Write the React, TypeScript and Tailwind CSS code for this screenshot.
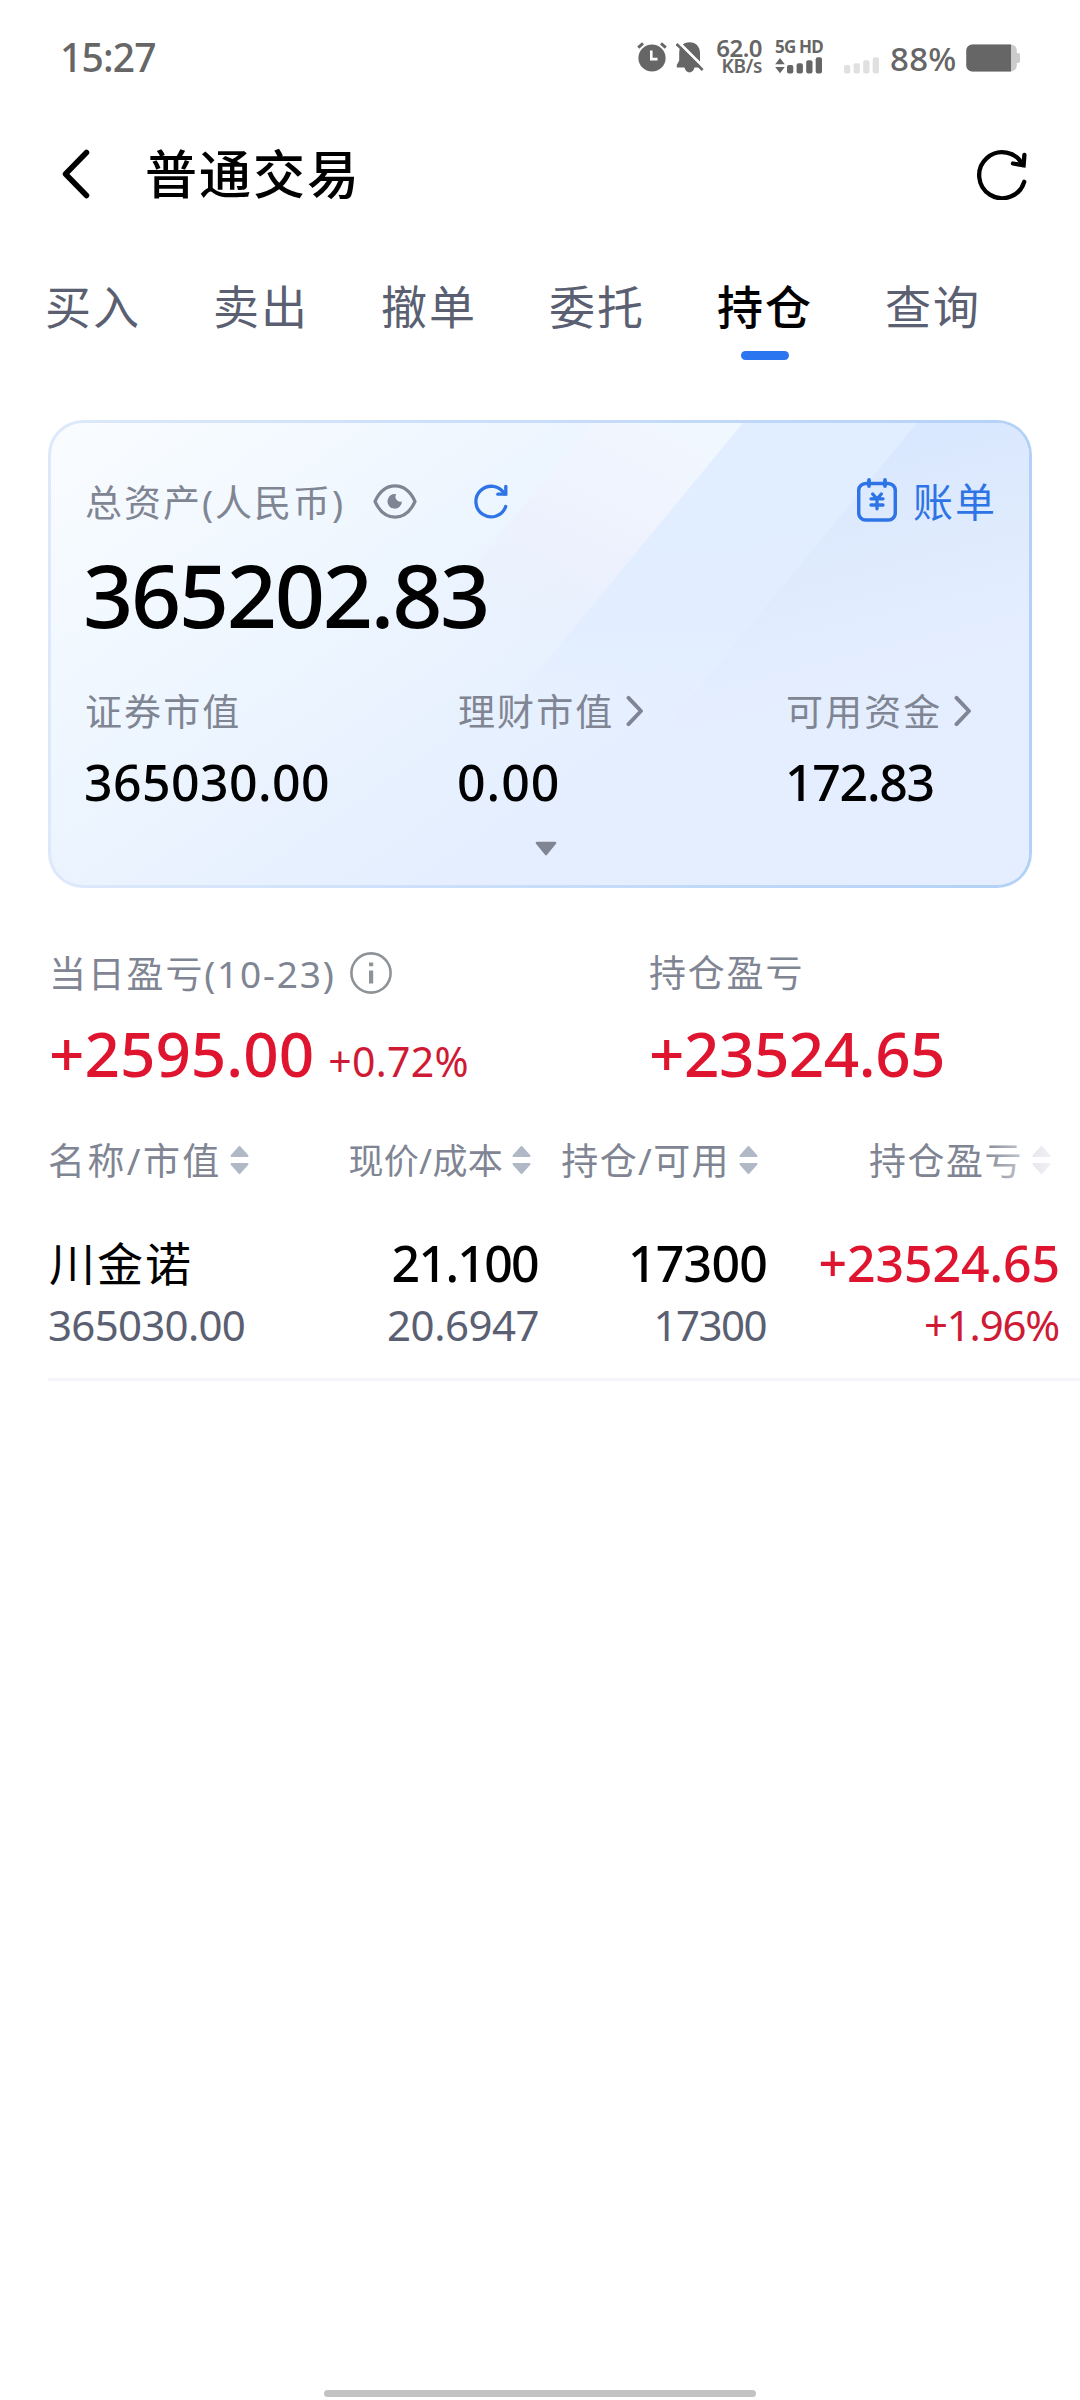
import clsx from 'clsx';

const tabs = ['买入', '卖出', '撤单', '委托', '持仓', '查询'];
const activeTab = '持仓';

function AlarmIcon() {
  return (
    <svg width="30" height="30" viewBox="0 0 30 30" fill="none">
      <circle cx="15" cy="16" r="13.6" fill="#666" />
      <path d="M1.2 5.6 6 1.4M28.8 5.6 24 1.4" stroke="#666" strokeWidth="3" />
      <path d="M14.3 8.5v8.6h6.2" stroke="#fff" strokeWidth="2.6" />
    </svg>
  );
}

function MutedBellIcon() {
  return (
    <svg width="28" height="31" viewBox="0 0 28 31" fill="none">
      <path
        d="M13.5.3C7 .3 3.2 5 3.2 11v7.5L.8 23v2.6h7.7c.6 3 2.6 4.9 5 4.9s4.4-1.9 5-4.9H24V11C24 5 20 .3 13.5.3Z"
        fill="#666"
      />
      <path d="M2.5.2 29 26.5" stroke="#fff" strokeWidth="3" />
      <path d="M.6 2 26.6 28" stroke="#666" strokeWidth="2.6" />
    </svg>
  );
}

function SignalBars({ color }: { color: string }) {
  return (
    <svg width="35" height="17" viewBox="0 0 35 17" fill={color}>
      <rect x="0" y="8" width="6.3" height="8.5" rx="2" />
      <rect x="9.6" y="6.3" width="6.3" height="10.2" rx="2" />
      <rect x="19.2" y="3.2" width="6.3" height="13.3" rx="2" />
      <rect x="28.7" y="0.2" width="6.3" height="16.3" rx="2" />
    </svg>
  );
}

function DataArrows() {
  return (
    <svg width="10" height="17" viewBox="0 0 10 17" fill="#666">
      <path d="M5 1 9.8 7.3H.2ZM5 16.2 9.8 9.9H.2Z" />
    </svg>
  );
}

function BatteryIcon() {
  return (
    <svg width="54" height="28" viewBox="0 0 54 28">
      <rect x="0.3" y="0.5" width="50.5" height="27" rx="6" fill="#cbcbcb" />
      <rect x="49" y="9" width="5" height="10" rx="2" fill="#cbcbcb" />
      <path d="M6.3.5H45v27H6.3a6 6 0 0 1-6-6v-15a6 6 0 0 1 6-6Z" fill="#666" />
    </svg>
  );
}

function BackIcon() {
  return (
    <svg width="28" height="50" viewBox="0 0 28 50" fill="none">
      <path d="M24.5 3.5 3.5 25l21 21.5" stroke="#000" strokeWidth="5.5" strokeLinecap="round" strokeLinejoin="round" />
    </svg>
  );
}

function RefreshIcon() {
  return (
    <svg width="50" height="52" viewBox="0 0 50 52" fill="none" stroke="#000" strokeWidth="4.3" strokeLinecap="round">
      <path d="M47.2 33.8A23 23 0 1 1 45.8 17" />
      <path d="M47.4 7 46.6 17.3 36 15.5" strokeLinejoin="miter" />
    </svg>
  );
}

function SmallRefreshIcon() {
  return (
    <svg width="34" height="35" viewBox="0 0 34 35" fill="none" stroke="#2e74e6" strokeWidth="3.3" strokeLinecap="round">
      <path d="M31.7 22.5A15.3 15.3 0 1 1 30.5 10" />
      <path d="M31.8 2.3v7.9h-8" />
    </svg>
  );
}

function EyeIcon() {
  return (
    <svg width="44" height="35" viewBox="0 0 44 35" fill="none">
      <path
        d="M2 17.5C6.5 7.5 13.5 1.9 22 1.9s15.5 5.6 20 15.6c-4.5 10-11.5 15.6-20 15.6S6.5 27.5 2 17.5Z"
        stroke="#808593"
        strokeWidth="3.2"
        strokeLinejoin="round"
      />
      <path d="M23.2 10.2a5 5 0 0 0 5.8 7.3 7.3 7.3 0 1 1-5.8-7.3Z" fill="#808593" />
    </svg>
  );
}

function BillIcon() {
  return (
    <svg width="40" height="44" viewBox="0 0 40 44" fill="none" stroke="#2e74e6" strokeLinecap="round">
      <rect x="1.7" y="5.5" width="36.6" height="36.6" rx="7" strokeWidth="3.5" />
      <path d="M12 2v6M28 2v6" strokeWidth="3.8" />
      <path d="M15.7 16 20 21l4.3-5M14 20.8h12M14 27h12M20 21v9.800" strokeWidth="3.3" />
    </svg>
  );
}

function InfoIcon() {
  return (
    <svg width="42" height="42" viewBox="0 0 42 42" fill="none">
      <circle cx="21" cy="21" r="19.6" stroke="#8e9397" strokeWidth="2.6" />
      <path d="M19 10.5h4.2v3.8H19ZM19 18.5h4.2v13H19Z" fill="#8e9397" />
    </svg>
  );
}

function ChevronIcon() {
  return (
    <svg width="18" height="32" viewBox="0 0 18 32" fill="none">
      <path d="M2.5 2.8 15 16 2.5 29.2" stroke="#808593" strokeWidth="3.9" strokeLinecap="round" strokeLinejoin="round" />
    </svg>
  );
}

function SortIcon() {
  return (
    <svg width="19" height="30" viewBox="0 0 19 30" fill="#b1b8c6" stroke="#b1b8c6" strokeWidth="2" strokeLinejoin="round">
      <path d="M9.5 2 17.5 11h-16ZM9.5 28 17.5 19h-16Z" />
    </svg>
  );
}

// Diagonal light bands behind the asset card content
function CardBackdrop() {
  return (
    <svg className="absolute inset-0" width="978" height="462" viewBox="0 0 978 462">
      <defs>
        <linearGradient id="sheen" x1="600" y1="0" x2="480" y2="250" gradientUnits="userSpaceOnUse">
          <stop offset="0" stopColor="#f1f7ff" />
          <stop offset="0.5" stopColor="#edf1fd" />
          <stop offset="1" stopColor="#e6f0fd" stopOpacity="0" />
        </linearGradient>
        <linearGradient id="middle" x1="0" y1="0" x2="0" y2="300" gradientUnits="userSpaceOnUse">
          <stop offset="0" stopColor="#e1eeff" />
          <stop offset="0.7" stopColor="#e2eeff" />
          <stop offset="1" stopColor="#e4eeff" stopOpacity="0" />
        </linearGradient>
        <linearGradient id="corner" x1="860" y1="0" x2="920" y2="240" gradientUnits="userSpaceOnUse">
          <stop offset="0" stopColor="#d9e7ff" />
          <stop offset="0.5" stopColor="#dfebfd" />
          <stop offset="1" stopColor="#e4eeff" />
        </linearGradient>
      </defs>
      <path d="M541 0H692L311 462H160Z" fill="url(#sheen)" />
      <path d="M692 0H978V462H311Z" fill="url(#middle)" />
      <path d="M866 0H978V462H485Z" fill="url(#corner)" />
    </svg>
  );
}

function StatusBar() {
  return (
    <div className="flex h-[114px] items-center pl-[60px] text-[#666]">
      <span className="-mt-[2px] text-[39px] leading-none font-[550] tracking-[-0.8px]">15:27</span>
      <div className="ml-auto flex items-center pr-[60px]">
        <AlarmIcon />
        <span className="ml-[9px]">
          <MutedBellIcon />
        </span>
        <div className="ml-[10px] flex w-[48px] flex-col items-end font-semibold">
          <span className="text-[24px] leading-[19px] tracking-[-0.5px]">62.0</span>
          <span className="text-[19px] leading-[19px] tracking-[-0.3px]">KB/s</span>
        </div>
        <div className="ml-[13px] w-[47px]">
          <p className="text-[17px] leading-[14px] font-bold tracking-[-0.8px] whitespace-nowrap">5G HD</p>
          <div className="mt-[3px] flex justify-between">
            <DataArrows />
            <SignalBars color="#666" />
          </div>
        </div>
        <div className="mt-[17px] ml-[22px]">
          <SignalBars color="#e0e0e0" />
        </div>
        <span className="mt-[2px] ml-[11px] w-[68px] text-[33px] leading-none font-[550] tracking-[0.3px]">88%</span>
        <span className="mt-[2px] ml-[8px]">
          <BatteryIcon />
        </span>
      </div>
    </div>
  );
}

function AssetCard() {
  const items = [
    { label: '证券市值', value: '365030.00', link: false, tracking: 'tracking-[0.4px]' },
    { label: '理财市值', value: '0.00', link: true, tracking: 'tracking-[1px]' },
    { label: '可用资金', value: '172.83', link: true, tracking: 'tracking-[-1.3px]' },
  ];

  return (
    <div className="mx-12 h-[468px] rounded-[35px] bg-linear-to-r from-[#dde9fb] to-[#b3d1f7] p-[3px]">
      <div className="relative h-full overflow-hidden rounded-[32px] bg-[linear-gradient(145deg,#fafcff_0%,#f1f8ff_22%,#e9f2fe_46%,#e4eeff_66%)]">
        <CardBackdrop />
        <div className="relative flex h-full flex-col pt-[49px] pr-[32px] pl-[34px]">
          <div className="flex h-[60px] items-center">
            <span className="text-[37px] leading-none tracking-[2px] text-[#808593]">总资产(人民币)</span>
            <span className="-mt-[2px] ml-[28px]">
              <EyeIcon />
            </span>
            <span className="-mt-[2px] ml-[57px]">
              <SmallRefreshIcon />
            </span>
            <div className="ml-auto flex items-center gap-[16px] text-[#2e74e6]">
              <span className="-mt-[5px]">
                <BillIcon />
              </span>
              <span className="text-[40px] leading-none tracking-[2px]">账单</span>
            </div>
          </div>
          <p className="mt-[22px] -ml-[2px] text-[88px] leading-[80px] font-[470] tracking-[-2.4px]">365202.83</p>
          <div className="mt-[57px] grid grid-cols-[373px_328px_auto]">
            {items.map(({ label, value, link, tracking }) => (
              <div key={label}>
                <div className="flex h-10 items-center gap-[12px] text-[#808593]">
                  <span className="text-[37px] leading-none tracking-[2.1px]">{label}</span>
                  {link && <ChevronIcon />}
                </div>
                <p className={clsx('mt-[26px] -ml-px text-[50px] leading-[50px] font-[480]', tracking)}>{value}</p>
              </div>
            ))}
          </div>
          <svg className="mt-[34px] ml-[450px]" width="22" height="15" viewBox="0 0 22 15">
            <path d="M2 2h18l-9 11Z" fill="#808593" stroke="#808593" strokeWidth="2.6" strokeLinejoin="round" />
          </svg>
        </div>
      </div>
    </div>
  );
}

function ProfitSummary() {
  return (
    <div className="mt-[65px] flex pl-[49px]">
      <div className="w-[600px]">
        <div className="flex h-10 items-center gap-[14px] text-[37px] leading-none tracking-[1.8px] text-[#7f8593]">
          当日盈亏(10-23)
          <InfoIcon />
        </div>
        <p className="mt-[30px] flex items-baseline gap-[14px] text-[62px] leading-[60px] font-[480] text-[#df142f]">
          +2595.00
          <span className="text-[41px] leading-none font-normal tracking-[0.3px] text-[#cf1a36]">+0.72%</span>
        </p>
      </div>
      <div>
        <p className="text-[37px] leading-10 tracking-[1.8px] text-[#7f8593]">持仓盈亏</p>
        <p className="mt-[30px] text-[62px] leading-[60px] font-[480] tracking-[-0.5px] text-[#df142f]">+23524.65</p>
      </div>
    </div>
  );
}

function Holdings() {
  return (
    <div className="mt-[57px] pl-12">
      <div className="relative grid h-10 grid-cols-[240px_252px_227px_293px] items-center text-[37px] leading-none whitespace-nowrap text-[#7f8593]">
        <span className="flex items-center gap-[8px] tracking-[2.4px]">
          名称/市值
          <SortIcon />
        </span>
        <span className="flex items-center justify-end gap-[9px] pr-[9px] text-[35px] tracking-[0.3px]">
          现价/成本
          <SortIcon />
        </span>
        <span className="flex items-center justify-end gap-[9px] pr-[9px] tracking-[1.4px]">
          持仓/可用
          <SortIcon />
        </span>
        <span className="flex items-center justify-end gap-[9px] pr-[9px] tracking-[1.5px]">
          持仓盈亏
          <SortIcon />
        </span>
        <div className="absolute top-0 right-0 h-10 w-[98px] bg-linear-to-r from-white/0 via-white/70 via-55% to-white" />
      </div>
      <div className="mt-[58px] grid h-[140px] grid-cols-[240px_252px_227px_293px] text-right text-[50px] leading-[50px] font-[480]">
        <div className="text-left">
          <p className="pl-px text-[46px] font-normal tracking-[2px]">川金诺</p>
          <p className="mt-[17px] text-[42px] leading-10 font-normal tracking-[-0.7px] text-[#5a6072]">365030.00</p>
        </div>
        <div>
          <p className="pr-[2px] tracking-[-1.7px]">21.100</p>
          <p className="mt-[17px] pr-px text-[42px] leading-10 font-normal tracking-[-0.5px] text-[#5a6072]">20.6947</p>
        </div>
        <div>
          <p className="tracking-[-0.8px]">17300</p>
          <p className="mt-[17px] pr-px text-[42px] leading-10 font-normal tracking-[-1.5px] text-[#5a6072]">17300</p>
        </div>
        <div className="text-[#df142f]">
          <p className="tracking-[-0.1px]">+23524.65</p>
          <p className="mt-[17px] pr-px text-[42px] leading-10 font-normal tracking-[-1.2px] text-[#cf1a36]">+1.96%</p>
        </div>
      </div>
      <div className="h-[3px] bg-[#f3f5f9]" />
    </div>
  );
}

export default function App() {
  return (
    <div className="flex h-[2400px] w-[1080px] flex-col overflow-hidden bg-white font-['Noto_Sans','Noto_Sans_CJK_SC',sans-serif] text-black">
      <StatusBar />
      <div className="flex h-[120px] items-center pr-[53px] pl-[62px]">
        <BackIcon />
        <h1 className="ml-[55px] text-[52px] leading-none font-medium tracking-[2px]">普通交易</h1>
        <span className="ml-auto">
          <RefreshIcon />
        </span>
      </div>
      <div className="mt-[42px] flex gap-[72px] pl-[45px]">
        {tabs.map((tab) => (
          <div key={tab} className="flex w-[96px] flex-col items-center">
            <span
              className={clsx(
                'text-[46px] leading-[60px] tracking-[2px] whitespace-nowrap',
                tab === activeTab ? 'font-medium text-black' : 'text-[#5a6072]',
              )}
            >
              {tab}
            </span>
            <span className={clsx('mt-[15px] h-[9px] w-12 rounded-full', tab === activeTab && 'bg-[#2b76f0]')} />
          </div>
        ))}
      </div>
      <div className="mt-[60px]">
        <AssetCard />
      </div>
      <ProfitSummary />
      <Holdings />
      <div className="mx-auto mt-auto mb-[3px] h-[7px] w-[432px] rounded-full bg-[#c2c2c2]" />
    </div>
  );
}
